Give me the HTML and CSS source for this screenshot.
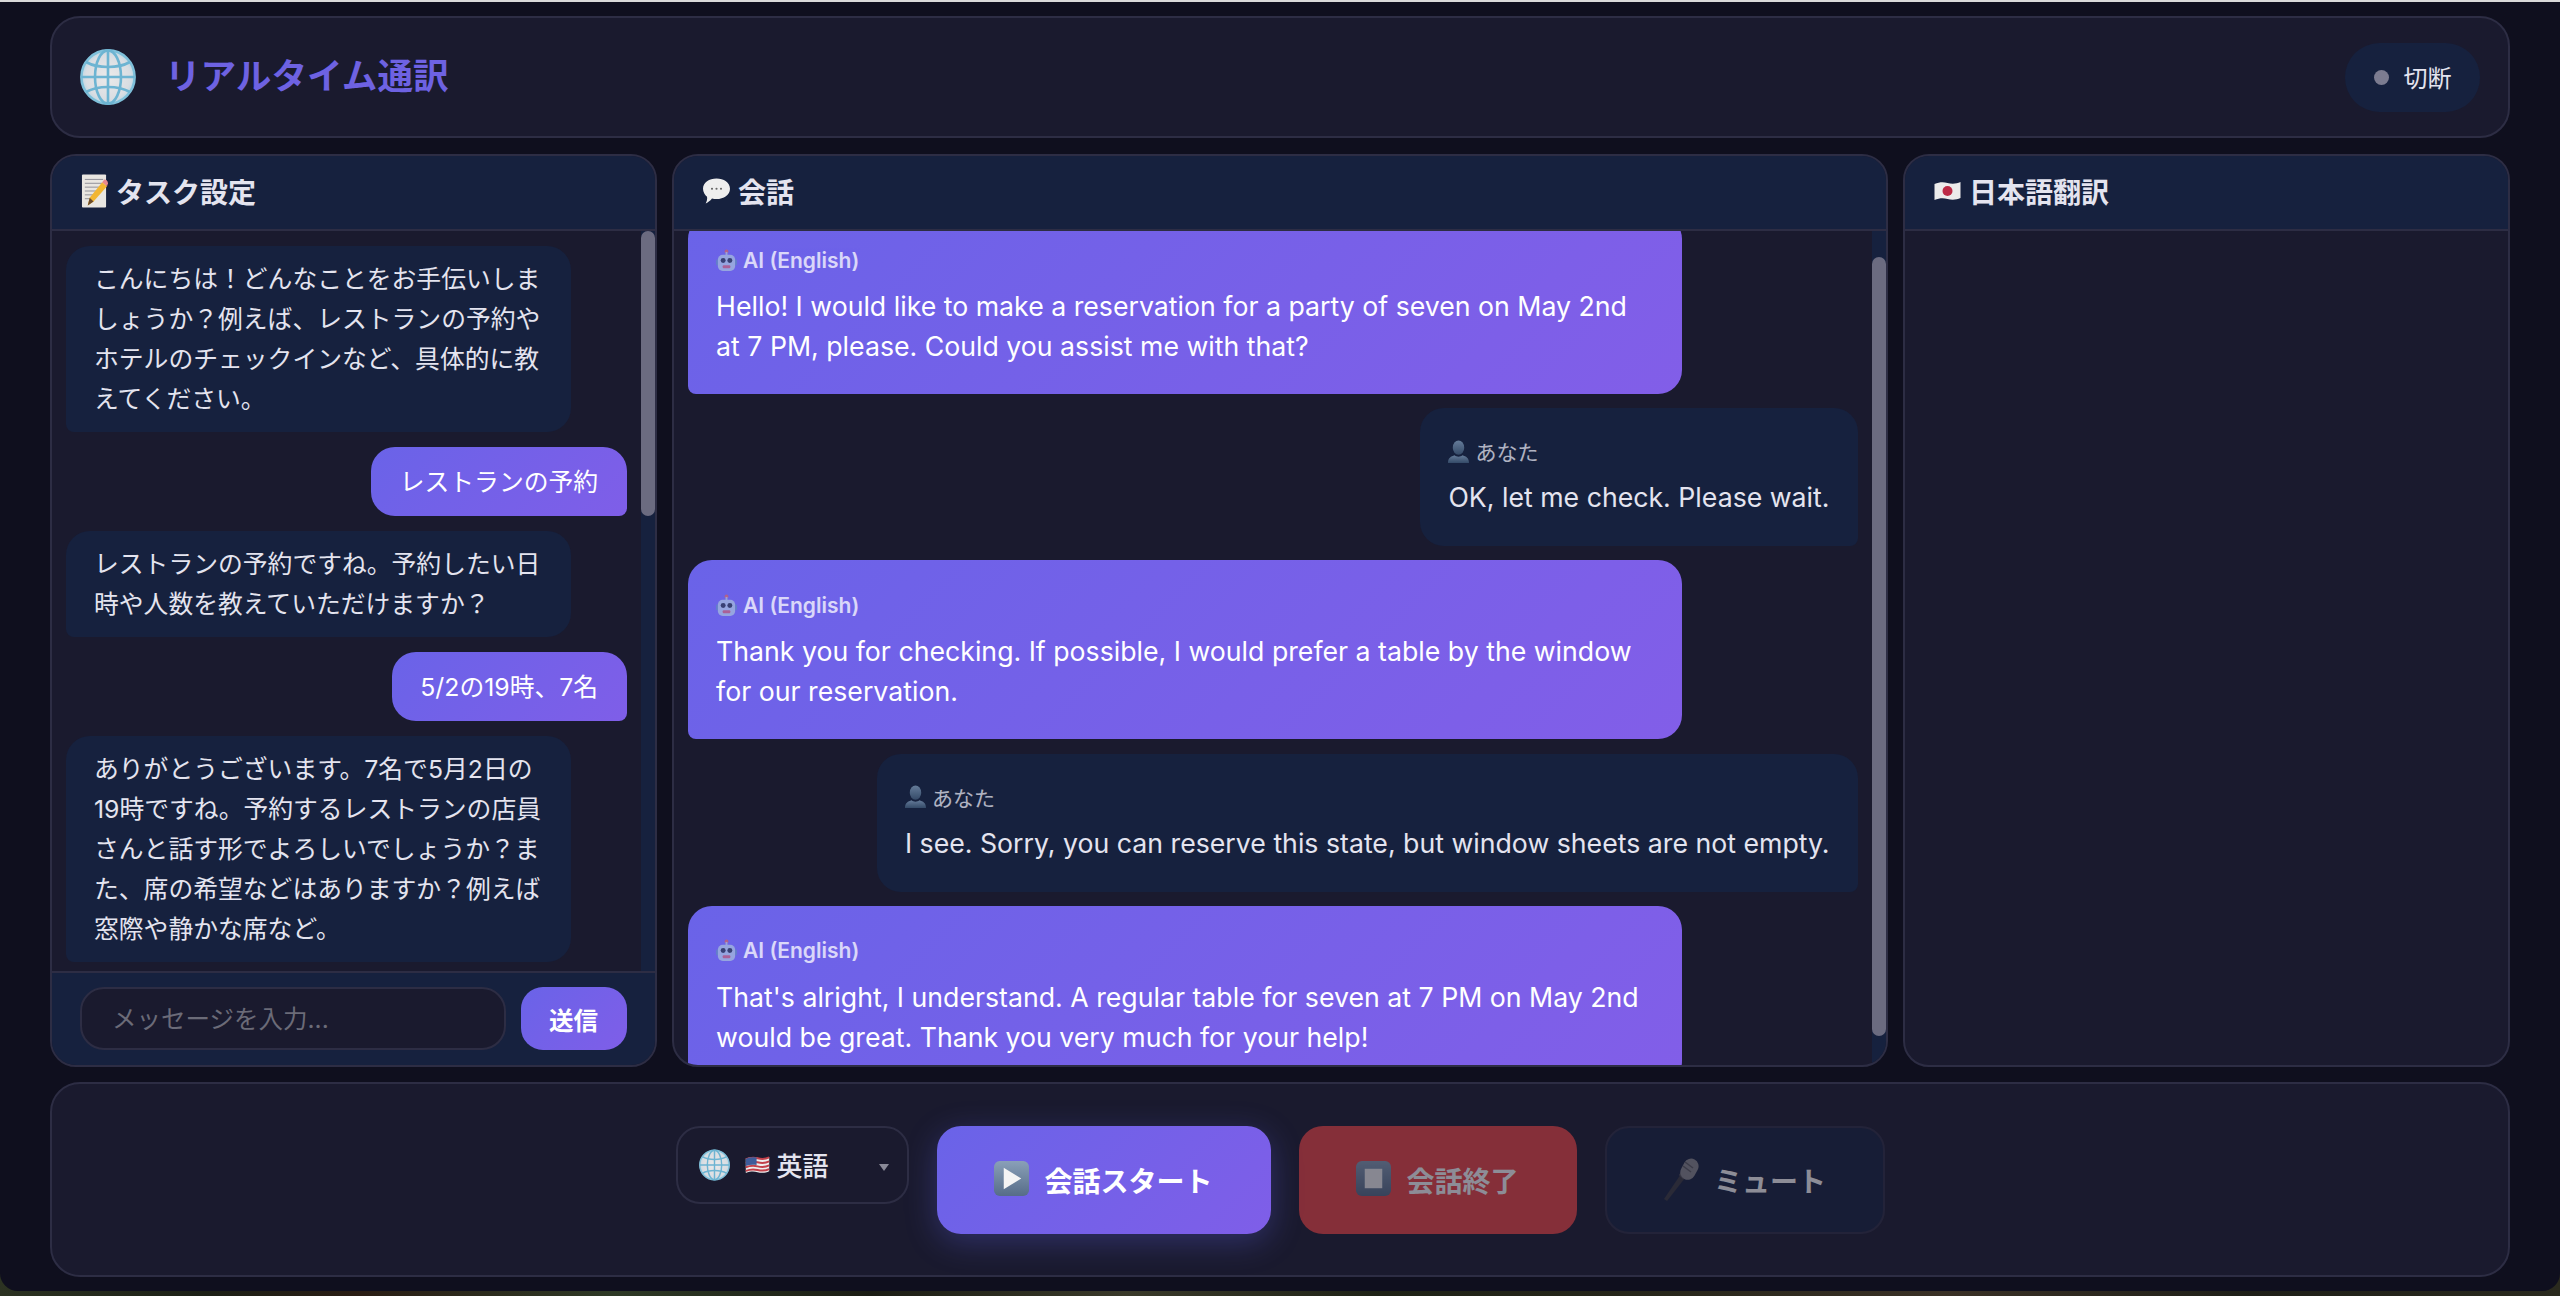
FILE: index.html
```html
<!DOCTYPE html>
<html lang="ja">
<head>
<meta charset="utf-8">
<title>リアルタイム通訳</title>
<link rel="stylesheet" href="styles.css">
</head>
<body>
<svg class="sprite" aria-hidden="true">
  <defs>
    <radialGradient id="gl" cx="50%" cy="50%" r="55%"><stop offset="0" stop-color="#eceaea"/><stop offset=".75" stop-color="#d9dde2"/><stop offset="1" stop-color="#a8d4e6"/></radialGradient>
    <linearGradient id="sq" x1="0" y1="0" x2="0" y2="1"><stop offset="0" stop-color="#8aa0b8"/><stop offset="1" stop-color="#566c88"/></linearGradient>
    <linearGradient id="pp" x1="0" y1="0" x2="0" y2="1"><stop offset="0" stop-color="#7f9ab8"/><stop offset="1" stop-color="#3f5876"/></linearGradient>
  </defs>
  <symbol id="i-globe" viewBox="0 0 56 56">
    <circle cx="28" cy="28" r="27" fill="url(#gl)"/>
    <g fill="none" stroke="#6db4d2" stroke-width="2.6">
      <circle cx="28" cy="28" r="26.6" stroke="#7fc0da"/>
      <ellipse cx="28" cy="28" rx="13" ry="26.6"/>
      <path d="M28 1.4v53.2M1.4 28h53.2"/>
      <path d="M6 13c6 3.4 14 5 22 5s16-1.600 22-5M6 43c6-3.400 14-5 22-5s16 1.600 22 5"/>
    </g>
  </symbol>
  <symbol id="i-memo" viewBox="0 0 28 36">
    <rect x="1" y="1" width="25" height="34" rx="1" fill="#e9e6e1"/>
    <path d="M4 6h19M4 10h19M4 14h15M4 18h12M4 22h9M4 26h7" stroke="#8f8f96" stroke-width="1"/>
    <path d="M7 33l2-8L22 9l5 4L13 29z" fill="#f2b632"/>
    <path d="M22 9l2-2.600c1-1 4 1 4 3.600l-1 3z" fill="#e8888c"/>
    <path d="M7 33l2-8 4 4z" fill="#6b4a2a"/>
  </symbol>
  <symbol id="i-chat" viewBox="0 0 30 30">
    <path d="M15 1c8 0 15 4.500 15 11.500S23 24 15 24c-2 0-3.500-.2-5-.6C8 26 5 28 3 29c1-2 2-4.500 1.500-7.500C2 19.500 0 16 0 12.500 0 5.500 7 1 15 1z" fill="#eeeeee"/>
    <circle cx="10" cy="12.500" r="1.200" fill="#666"/><circle cx="15" cy="12.500" r="1.200" fill="#666"/><circle cx="20" cy="12.500" r="1.200" fill="#666"/>
  </symbol>
  <symbol id="i-jp" viewBox="0 0 26 20">
    <path d="M0 3c5-2 9-2 13-1s9 1 13-1v16c-4 2-9 2-13 1s-8-1-13 1z" fill="#ecebea"/>
    <circle cx="13" cy="10" r="5" fill="#bc2a45"/>
  </symbol>
  <symbol id="i-us" viewBox="0 0 26 20">
    <path d="M0 3c5-2 9-2 13-1s9 1 13-1v16c-4 2-9 2-13 1s-8-1-13 1z" fill="#eee"/>
    <path d="M0 3.500c5-2 9-2 13-1s9 1 13-1M0 8c5-2 9-2 13-1s9 1 13-1M0 12.500c5-2 9-2 13-1s9 1 13-1M0 16.500c5-2 9-2 13-1s9 1 13-1" stroke="#c2404a" stroke-width="2.200" fill="none"/>
    <path d="M0 3c4-1.600 8-1.900 12-1.200V10c-4-.6-8-.4-12 1z" fill="#3e5c9a"/>
  </symbol>
  <symbol id="i-robot" viewBox="0 0 22 24">
    <circle cx="11" cy="2.500" r="2" fill="#c9606c"/><rect x="10" y="3" width="2" height="4" fill="#a8b8d0"/>
    <rect x="0" y="11" width="3" height="6" rx="1" fill="#5f86c0"/><rect x="19" y="11" width="3" height="6" rx="1" fill="#5f86c0"/>
    <rect x="2" y="6" width="18" height="17" rx="5" fill="#a4bcdc"/>
    <circle cx="7.500" cy="12" r="2.600" fill="#27354e"/><circle cx="14.500" cy="12" r="2.600" fill="#27354e"/>
    <rect x="7" y="17" width="8" height="3" rx="1" fill="#c0607c"/>
  </symbol>
  <symbol id="i-person" viewBox="0 0 22 24">
    <ellipse cx="11" cy="8" rx="6" ry="7.500" fill="url(#pp)"/>
    <path d="M0 24c0-5 3-7 7-8 1 1 2.500 1.500 4 1.500s3-.5 4-1.500c4 1 7 3 7 8z" fill="url(#pp)"/>
  </symbol>
  <symbol id="i-play" viewBox="0 0 36 36">
    <rect x="0" y="0" width="36" height="36" rx="6" fill="url(#sq)"/>
    <path d="M10 7l18 11-18 11z" fill="#f4f4f4"/>
  </symbol>
  <symbol id="i-stop" viewBox="0 0 36 36">
    <rect x="0" y="0" width="36" height="36" rx="6" fill="url(#sq)"/>
    <rect x="9" y="8" width="18" height="20" fill="#f4f4f4"/>
  </symbol>
  <symbol id="i-mic" viewBox="0 0 36 44">
    <path d="M1 42l17-25 4 4L4 44z" fill="#3a3a40"/>
    <path d="M16 18l4 4 3-2-5-5z" fill="#55555c"/>
    <rect x="19" y="1" width="15" height="22" rx="7.500" transform="rotate(28 26 12)" fill="#8a8a90"/>
    <path d="M22 5l8 6M20 9l8 6" stroke="#5c5c62" stroke-width="1.500"/>
  </symbol>
</svg>

<div class="window">
  <header class="topbar">
    <div class="brand">
      <svg class="brand-icon"><use href="#i-globe"/></svg>
      <h1 class="brand-title">リアルタイム通訳</h1>
    </div>
    <div class="status"><span class="status-dot"></span><span class="status-text">切断</span></div>
  </header>

  <main class="columns">
    <section class="panel">
      <h2 class="panel-head"><svg class="head-icon memo"><use href="#i-memo"/></svg><span class="head-text">タスク設定</span></h2>
      <div class="log-area">
        <div class="log task-log">
          <div class="task-msg">こんにちは！どんなことをお手伝いしましょうか？例えば、レストランの予約やホテルのチェックインなど、具体的に教えてください。</div>
          <div class="task-msg mine">レストランの予約</div>
          <div class="task-msg">レストランの予約ですね。予約したい日時や人数を教えていただけますか？</div>
          <div class="task-msg mine">5/2の19時、7名</div>
          <div class="task-msg">ありがとうございます。7名で5月2日の19時ですね。予約するレストランの店員さんと話す形でよろしいでしょうか？また、席の希望などはありますか？例えば窓際や静かな席など。</div>
        </div>
        <div class="rail"><div class="thumb task-thumb"></div></div>
      </div>
      <form class="composer">
        <input class="composer-input" type="text" placeholder="メッセージを入力...">
        <button class="send" type="button">送信</button>
      </form>
    </section>

    <section class="panel">
      <h2 class="panel-head"><svg class="head-icon chat"><use href="#i-chat"/></svg><span class="head-text">会話</span></h2>
      <div class="log-area">
        <div class="log talk-log" id="talk">
          <div class="talk-msg ai">
            <div class="who"><svg class="who-icon"><use href="#i-robot"/></svg>AI (English)</div>
            <p class="said">Hello! I would like to make a reservation for a party of seven on May 2nd at 7 PM, please. Could you assist me with that?</p>
          </div>
          <div class="talk-msg me">
            <div class="who"><svg class="who-icon"><use href="#i-person"/></svg>あなた</div>
            <p class="said">OK, let me check. Please wait.</p>
          </div>
          <div class="talk-msg ai">
            <div class="who"><svg class="who-icon"><use href="#i-robot"/></svg>AI (English)</div>
            <p class="said">Thank you for checking. If possible, I would prefer a table by the window for our reservation.</p>
          </div>
          <div class="talk-msg me">
            <div class="who"><svg class="who-icon"><use href="#i-person"/></svg>あなた</div>
            <p class="said">I see. Sorry, you can reserve this state, but window sheets are not empty.</p>
          </div>
          <div class="talk-msg ai">
            <div class="who"><svg class="who-icon"><use href="#i-robot"/></svg>AI (English)</div>
            <p class="said">That's alright, I understand. A regular table for seven at 7 PM on May 2nd would be great. Thank you very much for your help!</p>
          </div>
        </div>
        <div class="rail"><div class="thumb talk-thumb"></div></div>
      </div>
    </section>

    <section class="panel">
      <h2 class="panel-head"><svg class="head-icon jp"><use href="#i-jp"/></svg><span class="head-text">日本語翻訳</span></h2>
    </section>
  </main>

  <footer class="controls">
    <div class="lang">
      <svg class="lang-globe"><use href="#i-globe"/></svg>
      <svg class="lang-flag"><use href="#i-us"/></svg>
      <span class="lang-name">英語</span>
      <span class="lang-caret"></span>
    </div>
    <button class="action start" type="button"><svg class="action-icon"><use href="#i-play"/></svg>会話スタート</button>
    <button class="action end" type="button"><svg class="action-icon"><use href="#i-stop"/></svg>会話終了</button>
    <button class="action mute" type="button"><svg class="action-icon"><use href="#i-mic"/></svg>ミュート</button>
  </footer>
</div>
<script src="app.js"></script>
</body>
</html>
```

FILE: styles.css
```css
* { box-sizing: border-box; }
html, body { margin: 0; height: 100%; }
body {
  overflow: hidden;
  padding-top: 2px;
  font-family: Inter, "Noto Sans CJK JP", sans-serif;
  color: #e4e4ef;
  background:
    linear-gradient(#d9d9d9 0 2px, transparent 2px),
    linear-gradient(90deg, #2c3322 0, #1c2016 8%, #2a1d14 14%, #2e3a26 24%, #1b1d14 34%, #3a3a2a 44%, #1e2216 54%, #26261a 64%, #3a3126 76%, #1e1f18 88%, #2a2a1e 100%);
}
.sprite { position: absolute; width: 0; height: 0; }
.window {
  height: 1289px;
  padding: 14px 50px;
  display: flex;
  flex-direction: column;
  gap: 16px;
  background: #0f0f1e;
  border-radius: 0 0 18px 18px;
}
.topbar {
  flex: none;
  height: 122px;
  padding: 0 28px;
  display: flex;
  align-items: center;
  justify-content: space-between;
  background: #1a1a2e;
  border: 2px solid #2d2d44;
  border-radius: 30px;
}
.brand { display: flex; align-items: center; gap: 29px; }
.brand-icon { width: 56px; height: 58px; }
.brand-title {
  margin: 0;
  font-size: 35.600px;
  font-weight: 700;
  line-height: 1.2;
  color: #6e62e2;
}
.status {
  width: 135px;
  height: 69px;
  display: flex;
  align-items: center;
  justify-content: center;
  gap: 15px;
  font-size: 24px;
  border-radius: 35px;
  background: #16213e;
}
.status-text { padding-bottom: 2px; }
.status-dot { width: 15px; height: 15px; border-radius: 50%; background: #7c7c90; }

.columns {
  flex: 1;
  min-height: 0;
  margin-bottom: -1px;
  display: grid;
  grid-template-columns: 606.600px 1fr 607px;
  gap: 15.500px;
}
.panel {
  min-width: 0;
  min-height: 0;
  display: flex;
  flex-direction: column;
  overflow: hidden;
  background: #1a1a2e;
  border: 2px solid #2d2d44;
  border-radius: 26px;
}
.panel-head {
  flex: none;
  height: 75px;
  margin: 0;
  padding: 0 29px;
  display: flex;
  align-items: center;
  gap: 8px;
  font-size: 28px;
  font-weight: 600;
  background: #16213e;
  border-bottom: 2px solid #2d2d44;
}
.head-text { padding-bottom: 4px; }
.head-icon { flex: none; margin-bottom: 3px; }
.head-icon.memo { width: 27px; height: 36px; }
.head-icon.chat { width: 27px; height: 28px; }
.head-icon.jp { width: 27px; height: 20px; }

.log-area { flex: 1; min-height: 0; display: flex; }
.log {
  flex: 1;
  min-width: 0;
  overflow: hidden;
  display: flex;
  flex-direction: column;
  padding: 15px 14px 16px;
}
.rail { flex: none; width: 14px; background: #16213e; }
.thumb { background: #6b6b80; border-radius: 7px; }
.task-thumb { height: 285px; }
.talk-thumb { margin-top: 26px; height: 779px; }

.task-log { gap: 15px; }
.task-msg {
  flex: none;
  align-self: flex-start;
  max-width: 90%;
  padding: 13px 28px;
  font-size: 24.800px;
  line-height: 40px;
  background: #16213e;
  border-radius: 24px 24px 24px 8px;
}
.task-msg.mine {
  align-self: flex-end;
  padding: 14.500px 28.500px;
  color: #fff;
  background: linear-gradient(135deg, #6a63e8, #7f5ee8);
  border-radius: 24px 24px 8px 24px;
}

.talk-log { gap: 14.200px; }
.talk-msg {
  flex: none;
  max-width: 85%;
  padding: 27px 28px;
  border-radius: 24px;
}
.talk-msg.ai {
  align-self: flex-start;
  width: 85%;
  padding-bottom: 28px;
  color: #fff;
  background: linear-gradient(135deg, #6a63e8, #825ee8);
  border-bottom-left-radius: 8px;
}
.talk-msg.me {
  align-self: flex-end;
  padding: 25px 28px 29px;
  background: #16213e;
  border-bottom-right-radius: 8px;
}
.who {
  display: flex;
  align-items: center;
  gap: 6px;
  height: 36px;
  margin-bottom: 8px;
  font-size: 21px;
  font-weight: 600;
  opacity: .75;
}
.me .who { font-weight: 400; }
.who-icon { width: 21px; height: 23px; flex: none; }
.said { margin: 0; font-size: 26.700px; line-height: 40px; }

.controls {
  flex: none;
  height: 195px;
  padding-top: 42px;
  display: flex;
  justify-content: center;
  align-items: flex-start;
  gap: 28px;
  background: #1a1a2e;
  border: 2px solid #2d2d44;
  border-radius: 30px;
}
.lang {
  position: relative;
  width: 233px;
  height: 78px;
  padding-left: 21px;
  display: flex;
  align-items: center;
  background: #1a1a2e;
  border: 2px solid #2d2d44;
  border-radius: 24px;
}
.lang-globe { width: 31px; height: 32px; flex: none; }
.lang-flag { width: 25px; height: 18px; margin-left: 15px; flex: none; }
.lang-name { margin-left: 7px; padding-bottom: 2px; font-size: 26px; font-weight: 500; }
.lang-caret {
  position: absolute;
  right: 18px;
  top: 36px;
  width: 0;
  height: 0;
  border: 5.500px solid transparent;
  border-top: 7px solid #8a8a98;
  border-bottom: 0;
}
.action {
  height: 108px;
  display: flex;
  align-items: center;
  justify-content: center;
  gap: 15px;
  font-family: inherit;
  font-size: 28px;
  font-weight: 600;
  color: #fff;
  border: 0;
  border-radius: 24px;
}
.action-icon { width: 35px; height: 35px; flex: none; margin-bottom: 3px; }
.start {
  width: 334px;
  background: linear-gradient(135deg, #6a63e8, #7f5ee8);
  box-shadow: 0 8px 32px rgba(99, 102, 241, .3);
}
.end { width: 278px; background: #ef4444; opacity: .5; }
.mute {
  width: 280px;
  background: #16213e;
  border: 2px solid #2d2d44;
  opacity: .5;
}
.mute .action-icon { width: 36px; height: 44px; }

.composer {
  flex: none;
  height: 94px;
  padding: 14px 28px 0;
  display: flex;
  align-items: flex-start;
  gap: 15px;
  background: #16213e;
  border-top: 2px solid #2d2d44;
}
.composer-input {
  flex: 1;
  min-width: 0;
  height: 63px;
  padding: 0 30px;
  font-family: inherit;
  font-size: 24.500px;
  color: #e4e4ef;
  background: #1a1a2e;
  border: 2px solid #2d2d44;
  border-radius: 24px;
  outline: 0;
}
.composer-input::placeholder { color: #6b6b78; }
.send {
  flex: none;
  width: 106px;
  height: 63px;
  padding: 2px 0 0;
  font-family: inherit;
  font-size: 24.500px;
  font-weight: 600;
  color: #fff;
  background: linear-gradient(135deg, #6a63e8, #7f5ee8);
  border: 0;
  border-radius: 22px;
}
```

FILE: app.js
```js
document.getElementById('talk').scrollTop = 31;
```
